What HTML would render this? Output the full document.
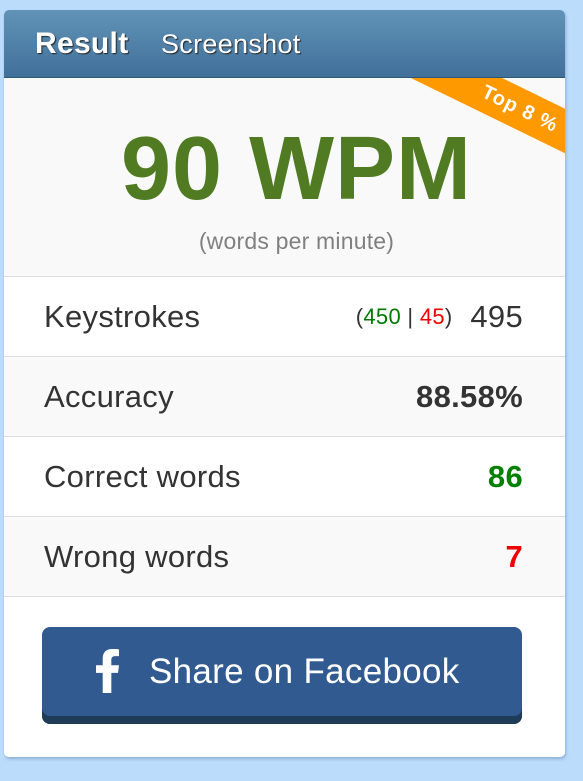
<!DOCTYPE html>
<html><head><style>
body{margin:0;width:583px;height:781px;background:#bcdcfb;font-family:"Liberation Sans",Arial,sans-serif;position:relative;overflow:hidden}
.card{position:absolute;left:4px;top:10px;width:561px;height:747px;background:#fff;border-radius:5px;box-shadow:1px 2px 3px rgba(80,120,170,.45);overflow:hidden}
.hd{height:67px;background:linear-gradient(#6193b7,#41709a);position:relative}
.hd span{position:absolute;top:17px;color:#fff;text-shadow:1px 1px 1px #222;letter-spacing:0.3px}
.top{position:absolute;top:67px;left:0;width:561px;height:199px;background:#f9f9f9;border-top:1px solid #2d5777;overflow:hidden}
.rib{position:absolute;left:366px;top:11px;width:300px;height:40px;background:#fe9900;transform:rotate(26deg);color:#fff;font-weight:bold;font-size:20px;line-height:40px;text-align:center;letter-spacing:1px}
.wpm{position:absolute;top:40px;left:12px;width:100%;text-align:center;font-size:90px;font-weight:bold;color:#517b22;letter-spacing:1px}
.sub{position:absolute;top:150px;left:12px;width:100%;text-align:center;font-size:23px;color:#808080;letter-spacing:0.2px}
.row{position:absolute;left:0;width:561px;height:79px;border-top:1px solid #ddd;font-size:31px;color:#333;letter-spacing:0.3px}
.row .l{position:absolute;left:40px;top:22px}
.row .r{position:absolute;right:42px;top:22px}
.btn{position:absolute;left:38px;top:617px;width:480px;height:97px;background:#305a90;border-radius:8px;box-shadow:inset 0 -8px 0 #1e3b57;color:#fff;font-size:35px;letter-spacing:0.3px}
</style></head><body>
<div class="card">
<div class="hd"><span style="left:31px;font-size:30px;font-weight:bold">Result</span><span style="left:157px;font-size:27px;top:19px">Screenshot</span></div>
<div class="top"><div class="rib">Top 8 %</div><div class="wpm">90 WPM</div><div class="sub">(words per minute)</div></div>
<div class="row" style="top:266px;background:#fff"><span class="l">Keystrokes</span><span class="r"><span style="font-size:22px;position:relative;top:-3px">(<span style="color:#007a00">450</span> | <span style="color:#e00">45</span>)</span>&nbsp;&nbsp;495</span></div>
<div class="row" style="top:346px;background:#f9f9f9"><span class="l">Accuracy</span><span class="r" style="font-weight:bold">88.58%</span></div>
<div class="row" style="top:426px;background:#fff"><span class="l">Correct words</span><span class="r" style="font-weight:bold;color:#008000">86</span></div>
<div class="row" style="top:506px;background:#f9f9f9"><span class="l">Wrong words</span><span class="r" style="font-weight:bold;color:#e00">7</span></div>
<div class="row" style="top:586px;height:161px;background:#fff"></div>
<div class="btn"><svg style="position:absolute;left:54px;top:21px" width="23" height="46" viewBox="0 0 24 46"><path d="M7 46V25H0v-8h7v-7C7 3 11 0 17 0c3 0 6 0 7 .5v7h-4c-3 0-4 1.5-4 4V17h8l-1 8h-7v21z" fill="#fff"/></svg><span style="position:absolute;left:107px;top:25px">Share on Facebook</span></div>
</div>
</body></html>
